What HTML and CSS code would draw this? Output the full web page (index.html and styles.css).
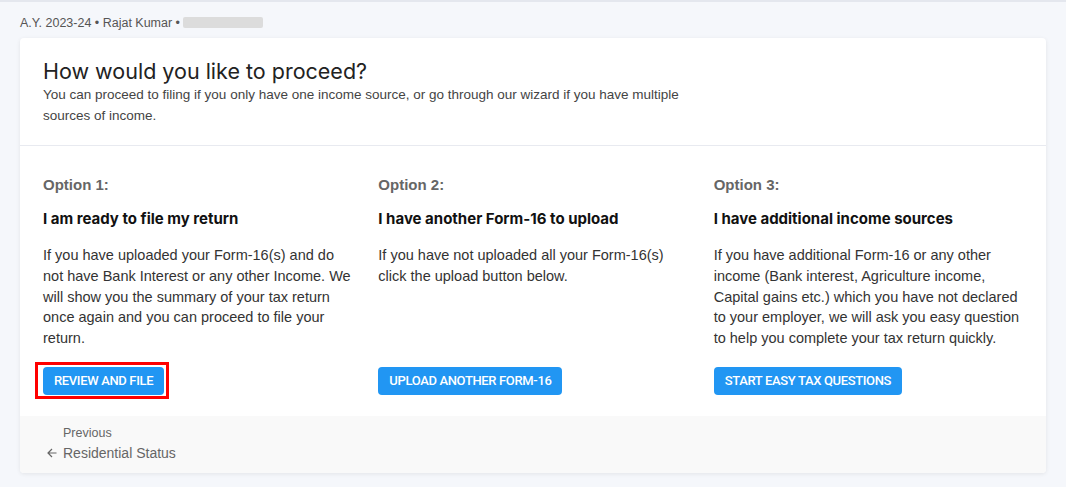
FILE: index.html
```html
<!DOCTYPE html>
<html lang="en">
<head>
    <meta charset="UTF-8">
    <title>How would you like to proceed?</title>
    <link rel="stylesheet" href="styles.css">
</head>
<body>
    <div class="page">
        <div class="crumb">A.Y. 2023-24 • Rajat Kumar • <span class="masked">PAN</span></div>
        <div class="card">
            <div class="card-head">
                <h1>How would you like to proceed?</h1>
                <p>You can proceed to filing if you only have one income source, or go through our wizard if you have multiple sources of income.</p>
            </div>
            <div class="options">
                <div class="option">
                    <div class="opt-label">Option 1:</div>
                    <h3>I am ready to file my return</h3>
                    <p>If you have uploaded your Form-16(s) and do not have Bank Interest or any other Income. We will show you the summary of your tax return once again and you can proceed to file your return.</p>
                    <div class="btn-row"><button class="btn marked">REVIEW AND FILE</button></div>
                </div>
                <div class="option">
                    <div class="opt-label">Option 2:</div>
                    <h3>I have another Form-16 to upload</h3>
                    <p>If you have not uploaded all your Form-16(s) click the upload button below.</p>
                    <div class="btn-row"><button class="btn">UPLOAD ANOTHER FORM-16</button></div>
                </div>
                <div class="option">
                    <div class="opt-label">Option 3:</div>
                    <h3>I have additional income sources</h3>
                    <p>If you have additional Form-16 or any other income (Bank interest, Agriculture income, Capital gains etc.) which you have not declared to your employer, we will ask you easy question to help you complete your tax return quickly.</p>
                    <div class="btn-row"><button class="btn">START EASY TAX QUESTIONS</button></div>
                </div>
            </div>
            <div class="card-foot">
                <div class="prev-label">Previous</div>
                <a class="prev-link" href="#">
                    <svg class="arrow" width="10" height="10" viewBox="0 0 10 10"><path d="M9.5 5H1M5 1L1 5l4 4" fill="none" stroke="#666" stroke-width="1.2"/></svg>
                    Residential Status
                </a>
            </div>
        </div>
    </div>
</body>
</html>
```

FILE: styles.css
```css
* {
    margin: 0;
    padding: 0;
    box-sizing: border-box;
}
body {
    background: #f5f7fb;
    font-family: 'Liberation Sans', Arial, sans-serif;
    color: #333;
    border-top: 2px solid #e4e7ee;
}
.page {
    padding: 14px 20px 14px 20px;
}
.crumb {
    font-size: 12.5px;
    color: #555;
    height: 22px;
}
.masked {
    display: inline-block;
    width: 80px;
    height: 11px;
    background: #dcdcdc;
    color: transparent;
    vertical-align: -1px;
    border-radius: 2px;
}
.card {
    background: #fff;
    border-radius: 4px;
    box-shadow: 0 1px 4px rgba(0,0,0,0.08);
    overflow: hidden;
}
.card-head {
    padding: 20px 23px 19px 23px;
    border-bottom: 1px solid #e8eaf0;
}
.card-head h1 {
    font-family: 'Inter', sans-serif;
    font-weight: 400;
    font-size: 21.5px;
    color: #222;
    line-height: 26px;
}
.card-head p {
    font-size: 13.5px;
    line-height: 21px;
    color: #444;
    max-width: 660px;
}
.options {
    display: grid;
    grid-template-columns: repeat(3, 1fr);
    gap: 26px;
    padding: 30px 23px 21px 23px;
}
.option {
    display: flex;
    flex-direction: column;
}
.opt-label {
    font-size: 15px;
    font-weight: bold;
    color: #666;
    margin-bottom: 16px;
}
.option h3 {
    font-family: 'Inter', sans-serif;
    font-size: 15px;
    font-weight: 700;
    color: #111;
    margin-bottom: 17px;
}
.option p {
    font-size: 14.5px;
    line-height: 20.8px;
    color: #333;
    flex: 1;
}
.btn-row {
    margin-top: 18px;
}
.btn {
    position: relative;
    background: #2196f3;
    color: #fff;
    border: none;
    border-radius: 4px;
    font-family: 'Roboto', sans-serif;
    font-size: 13px;
    font-weight: 500;
    letter-spacing: -0.35px;
    height: 28px;
    padding: 0 11px;
    cursor: pointer;
}
.btn.marked::after {
    content: '';
    position: absolute;
    top: -5px;
    left: -8px;
    right: -5px;
    bottom: -4px;
    border: 3px solid #ff0000;
}
.card-foot {
    background: #f9f9f9;
    padding: 10px 20px 12px 27px;
}
.prev-label {
    font-size: 12.5px;
    color: #666;
    padding-left: 16px;
    margin-bottom: 5px;
}
.prev-link {
    display: flex;
    align-items: center;
    gap: 6px;
    font-size: 14px;
    color: #666;
    text-decoration: none;
}
```
